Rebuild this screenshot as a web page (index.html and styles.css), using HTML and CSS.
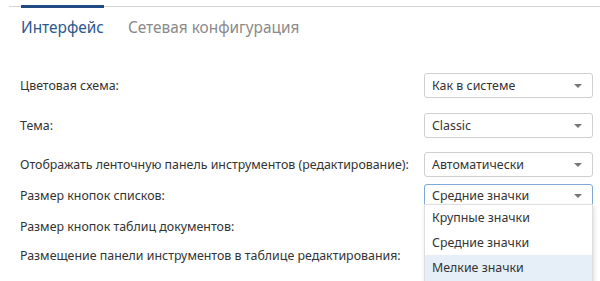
FILE: index.html
```html
<!DOCTYPE html>
<html lang="ru">
<head>
<meta charset="utf-8">
<link rel="stylesheet" href="styles.css">
</head>
<body>
<div class="tabs">
  <div class="tab active">Интерфейс</div>
  <div class="tab">Сетевая конфигурация</div>
</div>
<div class="form">
  <div class="row r1">
    <div class="label">Цветовая схема:</div>
    <div class="select"><span>Как в системе</span><i class="arrow"></i></div>
  </div>
  <div class="row r2">
    <div class="label">Тема:</div>
    <div class="select"><span>Classic</span><i class="arrow"></i></div>
  </div>
  <div class="row r3">
    <div class="label">Отображать ленточную панель инструментов (редактирование):</div>
    <div class="select"><span>Автоматически</span><i class="arrow"></i></div>
  </div>
  <div class="row r4">
    <div class="label">Размер кнопок списков:</div>
    <div class="select focus"><span>Средние значки</span><i class="arrow"></i>
      <div class="menu">
        <div class="item">Крупные значки</div>
        <div class="item">Средние значки</div>
        <div class="item hover">Мелкие значки</div>
      </div>
    </div>
  </div>
  <div class="row r5">
    <div class="label">Размер кнопок таблиц документов:</div>
    <div class="select"></div>
  </div>
  <div class="row r6">
    <div class="label">Размещение панели инструментов в таблице редактирования:</div>
    <div class="select"></div>
  </div>
</div>
</body>
</html>
```
FILE: styles.css
```css
html, body { margin: 0; padding: 0; background: #fff; }
body {
  font-family: "Noto Sans", "Open Sans", sans-serif;
  color: #333;
  width: 600px;
  height: 281px;
  overflow: hidden;
}
.tabs {
  display: flex;
  gap: 24px;
  margin: 5px 0 0 9px;
  padding-left: 12px;
  background: linear-gradient(#d4d4d4, #d4d4d4) no-repeat 0 1px / 100% 1px;
}
.tab {
  border-top: 3px solid transparent;
  padding-top: 10px;
  font-size: 15.4px;
  line-height: 20px;
  color: #8a8a8a;
}
.tab.active {
  border-top-color: #1f4a82;
  color: #2b5a92;
}
.form {
  padding: 0 7px 0 20px;
}
.row {
  display: flex;
  align-items: center;
  justify-content: space-between;
  height: 25px;
  font-size: 12.4px;
}
.r1 { margin-top: 35px; }
.r2 { margin-top: 15px; }
.r3 { margin-top: 14px; }
.r4 { margin-top: 6px; }
.r5 { margin-top: 6px; }
.r6 { margin-top: 4px; }
.label { white-space: nowrap; }
.select {
  position: relative;
  box-sizing: border-box;
  width: 169px;
  height: 25px;
  border: 1px solid #cfcfcf;
  border-radius: 3px;
  display: flex;
  align-items: center;
  padding: 0 8px 0 7px;
  justify-content: space-between;
  color: #333;
}
.select.focus { border-color: #7fa8d4; height: 24px; }
.arrow {
  width: 0; height: 0;
  border-left: 4px solid transparent;
  border-right: 4px solid transparent;
  border-top: 4px solid #777;
  margin-right: 2px;
}
.menu {
  position: absolute;
  left: -1px;
  top: 19px;
  width: 169px;
  box-sizing: border-box;
  background: #fff;
  border: 1px solid #dedede;
  box-shadow: 1px 2px 4px rgba(0,0,0,0.15);
  z-index: 5;
}
.item {
  height: 25px;
  line-height: 25px;
  padding-left: 7px;
  font-size: 12.4px;
  color: #333;
}
.item.hover { background: #e6eef8; height: 28px; }
```
